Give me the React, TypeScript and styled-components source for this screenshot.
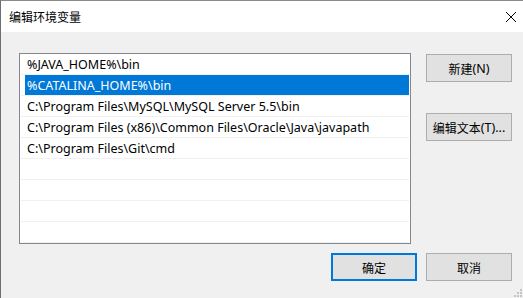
import React from "react";
import styled, { createGlobalStyle } from "styled-components";

const Global = createGlobalStyle`
  html, body { margin: 0; padding: 0; background: #f0f0f0; }
  body { font-family: "Segoe UI", "Noto Sans", "Noto Sans CJK SC", sans-serif; }
`;

const CJK = `"Noto Sans CJK SC", "Noto Sans", sans-serif`;
const LATIN = `"Segoe UI", "Noto Sans", "Noto Sans CJK SC", sans-serif`;

const Window = styled.div`
  position: relative;
  width: 523px;
  height: 298px;
  box-sizing: border-box;
  border-top: 1px solid #8a8a8a;
  border-left: 1px solid #6e6e6e;
  background: #f0f0f0;
  display: flex;
  flex-direction: column;
  overflow: hidden;
`;

const TitleBar = styled.div`
  height: 31px;
  background: #ffffff;
  display: flex;
  align-items: center;
  justify-content: space-between;
  padding: 0 6px 0 8px;
  flex-shrink: 0;
`;

const Title = styled.span`
  font-family: ${CJK};
  font-size: 12px;
  color: #000;
  line-height: 1;
`;

const CloseBtn = styled.div`
  width: 12px;
  height: 12px;
  display: flex;
`;

const Body = styled.div`
  flex: 1;
  padding: 21px 10px 0 18px;
  display: flex;
  flex-direction: column;
`;

const Main = styled.div`
  display: flex;
  gap: 15px;
`;

const List = styled.div`
  width: 392px;
  height: 191px;
  box-sizing: border-box;
  border: 1px solid #828790;
  background: #fff;
  padding: 0 1px;
  display: flex;
  flex-direction: column;
`;

const Row = styled.div`
  height: 20px;
  flex-shrink: 0;
  border-bottom: 1px solid #f0f0f0;
  padding-left: 4px;
  display: flex;
`;

const RowInner = styled.div<{ $selected?: boolean }>`
  flex: 1;
  display: flex;
  align-items: center;
  padding-left: 2px;
  background: ${(p) => (p.$selected ? "#0078d7" : "transparent")};
  color: ${(p) => (p.$selected ? "#ffffff" : "#000000")};
  font-family: ${LATIN};
  font-size: 12.5px;
  white-space: nowrap;
`;

const Side = styled.div`
  display: flex;
  flex-direction: column;
  gap: 31px;
  padding-top: 1px;
`;

const Button = styled.div<{ $default?: boolean }>`
  width: 86px;
  height: 28px;
  box-sizing: border-box;
  border: ${(p) => (p.$default ? "2px solid #0078d7" : "1px solid #adadad")};
  background: #e1e1e1;
  display: flex;
  align-items: center;
  justify-content: center;
  font-family: ${LATIN};
  font-size: 12.5px;
  color: #000;
  white-space: nowrap;
`;

const Cjk = styled.span`
  font-family: ${CJK};
  font-size: 12px;
`;

const Footer = styled.div`
  display: flex;
  justify-content: flex-end;
  gap: 9px;
  margin-top: 9px;
  padding-right: 1px;
`;

const Grip = styled.svg`
  position: absolute;
  right: 0;
  bottom: 0;
`;

const items = [
  "%JAVA_HOME%\\bin",
  "%CATALINA_HOME%\\bin",
  "C:\\Program Files\\MySQL\\MySQL Server 5.5\\bin",
  "C:\\Program Files (x86)\\Common Files\\Oracle\\Java\\javapath",
  "C:\\Program Files\\Git\\cmd",
  "",
  "",
  "",
  "",
];

export default function App() {
  return (
    <>
      <Global />
      <Window>
        <TitleBar>
          <Title>编辑环境变量</Title>
          <CloseBtn>
            <svg width="12" height="12" viewBox="0 0 12 12">
              <path d="M1 1 L11 11 M11 1 L1 11" stroke="#000" strokeWidth="1" fill="none" />
            </svg>
          </CloseBtn>
        </TitleBar>
        <Body>
          <Main>
            <List>
              {items.map((t, i) => (
                <Row key={i}>
                  <RowInner $selected={i === 1}>{t}</RowInner>
                </Row>
              ))}
            </List>
            <Side>
              <Button>
                <Cjk>新建</Cjk>(N)
              </Button>
              <Button>
                <Cjk>编辑文本</Cjk>(T)...
              </Button>
            </Side>
          </Main>
          <Footer>
            <Button $default>
              <Cjk>确定</Cjk>
            </Button>
            <Button>
              <Cjk>取消</Cjk>
            </Button>
          </Footer>
        </Body>
        <Grip width="10" height="10" viewBox="0 0 10 10">
          <rect x="7" y="1" width="2" height="2" fill="#c4c4c4" />
          <rect x="4" y="4" width="2" height="2" fill="#c4c4c4" />
          <rect x="7" y="4" width="2" height="2" fill="#c4c4c4" />
          <rect x="1" y="7" width="2" height="2" fill="#c4c4c4" />
          <rect x="4" y="7" width="2" height="2" fill="#c4c4c4" />
          <rect x="7" y="7" width="2" height="2" fill="#c4c4c4" />
        </Grip>
      </Window>
    </>
  );
}
